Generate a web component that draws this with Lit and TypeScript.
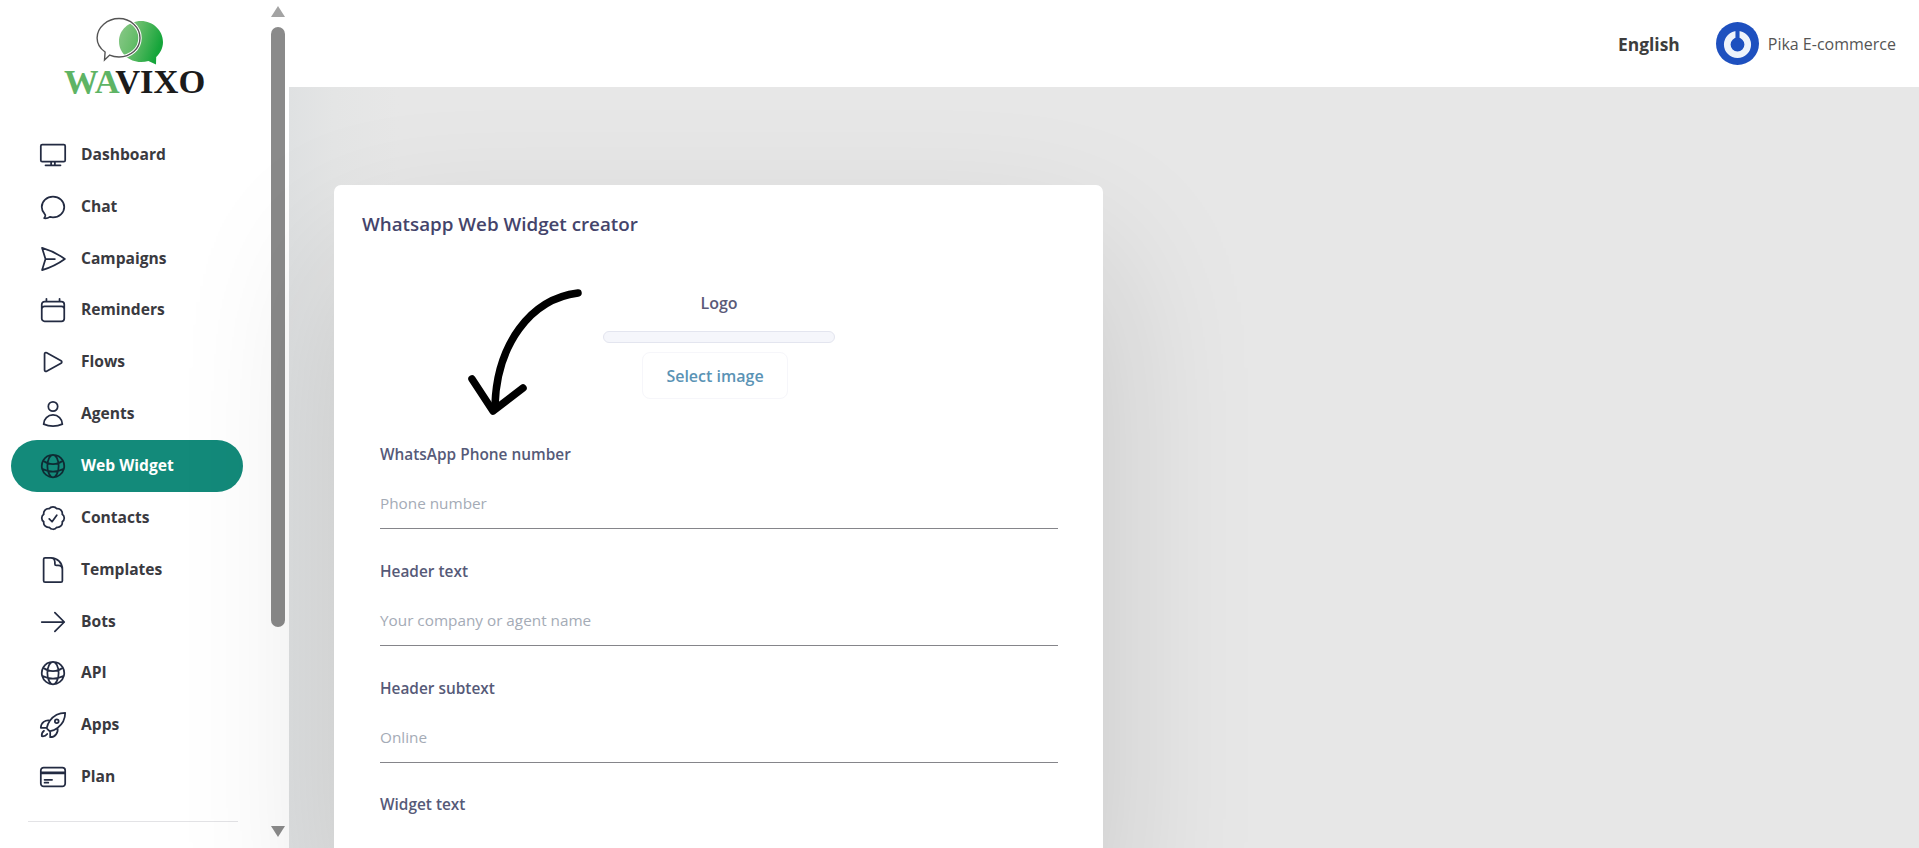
import { LitElement, html, css } from "lit";
import { customElement } from "lit/decorators.js";

const ICONS: Record<string, string> = {
  tv: "M6 20.25h12m-7.5-3v3m3-3v3m-10.125-3h17.25c.621 0 1.125-.504 1.125-1.125V4.875c0-.621-.504-1.125-1.125-1.125H3.375c-.621 0-1.125.504-1.125 1.125v11.25c0 .621.504 1.125 1.125 1.125z",
  chat: "M12 20.25c4.97 0 9-3.694 9-8.25s-4.03-8.25-9-8.25S3 7.444 3 12c0 2.104.859 4.023 2.273 5.48.432.447.74 1.04.586 1.641a4.483 4.483 0 01-.923 1.785A5.969 5.969 0 006 21c1.282 0 2.47-.402 3.445-1.087.81.22 1.668.337 2.555.337z",
  plane: "M6 12L3.269 3.126A59.768 59.768 0 0121.485 12 59.77 59.77 0 013.27 20.876L5.999 12zm0 0h7.5",
  calendar: "M6.75 3v2.25M17.25 3v2.25M3 18.75V7.5a2.25 2.25 0 012.25-2.25h13.5A2.25 2.25 0 0121 7.5v11.25m-18 0A2.25 2.25 0 005.25 21h13.5A2.25 2.25 0 0021 18.75m-18 0v-7.5A2.25 2.25 0 015.25 9h13.5A2.25 2.25 0 0121 11.25v7.5",
  play: "M5.25 5.653c0-.856.917-1.398 1.667-.986l11.54 6.348a1.125 1.125 0 010 1.971l-11.54 6.347a1.125 1.125 0 01-1.667-.985V5.653z",
  user: "M15.75 6a3.75 3.75 0 11-7.5 0 3.75 3.75 0 017.5 0zM4.501 20.118a7.5 7.5 0 0114.998 0A17.933 17.933 0 0112 21.75c-2.676 0-5.216-.584-7.499-1.632z",
  globe: "M12 21a9.004 9.004 0 008.716-6.747M12 21a9.004 9.004 0 01-8.716-6.747M12 21c2.485 0 4.5-4.03 4.5-9S14.485 3 12 3m0 18c-2.485 0-4.5-4.03-4.5-9S9.515 3 12 3m0 0a8.997 8.997 0 017.843 4.582M12 3a8.997 8.997 0 00-7.843 4.582m15.686 0A11.953 11.953 0 0112 10.5c-2.998 0-5.74-1.1-7.843-2.918m15.686 0A8.959 8.959 0 0121 12c0 .778-.099 1.533-.284 2.253m0 0A17.919 17.919 0 0112 16.5c-3.162 0-6.133-.815-8.716-2.247m0 0A9.015 9.015 0 013 12c0-1.605.42-3.113 1.157-4.418",
  badge: "M9 12.75L11.25 15 15 9.75M21 12c0 1.268-.63 2.39-1.593 3.068a3.745 3.745 0 01-1.043 3.296 3.745 3.745 0 01-3.296 1.043A3.745 3.745 0 0112 21c-1.268 0-2.39-.63-3.068-1.593a3.746 3.746 0 01-3.296-1.043 3.745 3.745 0 01-1.043-3.296A3.745 3.745 0 013 12c0-1.268.63-2.39 1.593-3.068a3.745 3.745 0 011.043-3.296 3.746 3.746 0 013.296-1.043A3.746 3.746 0 0112 3c1.268 0 2.39.63 3.068 1.593a3.746 3.746 0 013.296 1.043 3.746 3.746 0 011.043 3.296A3.745 3.745 0 0121 12z",
  doc: "M19.5 14.25v-2.625a3.375 3.375 0 00-3.375-3.375h-1.5A1.125 1.125 0 0113.5 7.125v-1.5a3.375 3.375 0 00-3.375-3.375H8.25m2.25 0H5.625c-.621 0-1.125.504-1.125 1.125v17.25c0 .621.504 1.125 1.125 1.125h12.75c.621 0 1.125-.504 1.125-1.125V11.25a9 9 0 00-9-9z",
  arrow: "M13.5 4.5L21 12m0 0l-7.5 7.5M21 12H3",
  rocket: "M15.59 14.37a6 6 0 01-5.84 7.38v-4.8m5.84-2.58a14.98 14.98 0 006.16-12.12A14.98 14.98 0 009.631 8.41m5.96 5.96a14.926 14.926 0 01-5.841 2.58m-.119-8.54a6 6 0 00-7.381 5.84h4.8m2.581-5.84a14.927 14.927 0 00-2.58 5.84m2.699 2.7c-.103.021-.207.041-.311.06a15.09 15.09 0 01-2.448-2.448 14.9 14.9 0 01.06-.312m-2.24 2.39a4.493 4.493 0 00-1.757 4.306 4.493 4.493 0 004.306-1.758M16.5 9a1.5 1.5 0 11-3 0 1.5 1.5 0 013 0z",
  card: "M2.25 8.25h19.5M2.25 9h19.5m-16.5 5.25h6m-6 2.25h3m-3.75 3h15a2.25 2.25 0 002.25-2.25V6.75A2.25 2.25 0 0019.5 4.5h-15a2.25 2.25 0 00-2.25 2.25v10.5A2.25 2.25 0 004.5 19.5z",
};

const NAV: [string, string][] = [
  ["tv", "Dashboard"], ["chat", "Chat"], ["plane", "Campaigns"], ["calendar", "Reminders"],
  ["play", "Flows"], ["user", "Agents"], ["globe", "Web Widget"], ["badge", "Contacts"],
  ["doc", "Templates"], ["arrow", "Bots"], ["globe", "API"], ["rocket", "Apps"], ["card", "Plan"],
];

const FIELDS: [string, string][] = [
  ["WhatsApp Phone number", "Phone number"],
  ["Header text", "Your company or agent name"],
  ["Header subtext", "Online"],
  ["Widget text", ""],
];

const BUBBLE = "M119 18.500c11.500 0 21 8.700 21 19.500s-9.500 19-21 19c-3.500 0-6.500-.6-9.300-1.900L104.500 60l.6-8c-5-3.500-8-8.500-8-14 0-10.800 10.400-19.500 21.900-19.500z";

@customElement("app-root")
export class AppRoot extends LitElement {
  static styles = css`
    :host {
      display: grid;
      grid-template-columns: 289px 1fr;
      width: 100%;
      height: 848px;
      overflow: hidden;
      font-family: "Open Sans", "Noto Sans", sans-serif;
      background: #fff;
    }
    .sidebar {
      display: flex;
      height: 848px;
      overflow: hidden;
    }
    .side-main {
      width: 270px;
      flex: none;
      display: flex;
      flex-direction: column;
    }
    .logo {
      height: 129px;
      padding-left: 64px;
      box-sizing: border-box;
      flex: none;
    }
    .logo svg { display: block; margin-left: 31px; margin-top: 15px; }
    .wordmark {
      font-family: "Liberation Serif", serif;
      font-weight: 700;
      font-size: 34.5px;
      line-height: 28px;
      color: #1b1b1b;
      white-space: nowrap;
    }
    .wordmark span { color: #5eb465; }
    nav {
      display: flex;
      flex-direction: column;
      padding: 0 27px 0 11px;
    }
    .item {
      height: 51.85px;
      display: flex;
      align-items: center;
      gap: 13px;
      padding-left: 27px;
      border-radius: 26px;
      font-size: 15.6px;
      font-weight: 700;
      color: #3a3a3f;
      box-sizing: border-box;
    }
    .item span { padding-bottom: 2px; }
    .item.active { background: #138a7a; color: #fff; }
    .item svg {
      width: 30px;
      height: 30px;
      flex: none;
      fill: none;
      stroke: #232b42;
      stroke-width: 1.4;
      stroke-linecap: round;
      stroke-linejoin: round;
    }
    .item.active svg { stroke: #0e2b33; }
    .rule {
      height: 1px;
      background: #e3e3e6;
      margin: 18px 32px 0 28px;
    }
    .scrollbar {
      width: 15px;
      flex: none;
      display: flex;
      flex-direction: column;
      align-items: center;
      padding-top: 6px;
      box-sizing: border-box;
      height: 848px;
    }
    .up {
      width: 0; height: 0;
      border-left: 7.5px solid transparent;
      border-right: 7.5px solid transparent;
      border-bottom: 11px solid #a3a3a3;
    }
    .down {
      width: 0; height: 0;
      border-left: 7.5px solid transparent;
      border-right: 7.5px solid transparent;
      border-top: 11px solid #8c8c8c;
      margin-top: 199px;
    }
    .thumb {
      width: 14px;
      height: 600px;
      margin-top: 10px;
      background: #8a8a8a;
      border-radius: 7px;
    }
    .main {
      display: flex;
      flex-direction: column;
      min-width: 0;
      position: relative;
    }
    header {
      height: 87px;
      flex: none;
      background: #fff;
      display: flex;
      align-items: center;
      justify-content: flex-end;
      padding-right: 23px;
      box-sizing: border-box;
      position: relative;
      z-index: 2;
    }
    .lang {
      font-size: 17.4px;
      font-weight: 700;
      color: #3d3d3d;
      margin-right: 36px;
    }
    .avatar { width: 43px; height: 43px; flex: none; margin-right: 9px; }
    .org { font-size: 16px; color: #555; }
    .content {
      flex: 1;
      background: linear-gradient(90deg, #dfe1e2 0, #e4e5e5 45px, #e7e7e7 110px);
      padding: 98px 0 0 45px;
      position: relative;
      z-index: 1;
      min-height: 0;
    }
    .card {
      width: 769px;
      height: 700px;
      background: #fff;
      border-radius: 7px;
      box-shadow: 0 70px 160px rgba(0,0,0,.14);
      position: relative;
      padding: 26px 28px 0;
      box-sizing: border-box;
    }
    h1 {
      margin: 0;
      font-size: 18.8px;
      line-height: 26px;
      font-weight: 600;
      color: #44446b;
    }
    .logo-block {
      display: flex;
      flex-direction: column;
      margin-top: 55px;
      margin-left: 241px;
      width: 232px;
    }
    .logo-label {
      font-size: 16px;
      line-height: 22px;
      font-weight: 600;
      color: #5a5a78;
      text-align: center;
    }
    .bar {
      height: 12px;
      margin-top: 17px;
      background: #f5f6fb;
      border: 1px solid #e3e5ef;
      border-radius: 6px;
      box-sizing: border-box;
    }
    .btn {
      width: 146px;
      height: 47px;
      margin: 9px 0 0 39px;
      box-sizing: border-box;
      border: 1px solid #f6f6fa;
      border-radius: 8px;
      display: flex;
      align-items: center;
      justify-content: center;
      font-size: 16px;
      font-weight: 600;
      color: #5a93b5;
    }
    .fields {
      display: flex;
      flex-direction: column;
      padding: 45px 17px 0 18px;
    }
    .field { height: 116.8px; }
    .label {
      font-size: 15.4px;
      line-height: 22px;
      font-weight: 600;
      color: #565a78;
    }
    .input {
      height: 63px;
      display: flex;
      align-items: center;
      padding-top: 12px;
      box-sizing: border-box;
      font-size: 15.3px;
      color: #a4abb6;
      border-bottom: 1px solid #85858a;
    }
    .arrow {
      position: absolute;
      left: 0; top: 0;
      width: 769px; height: 300px;
      pointer-events: none;
      fill: none;
      stroke: #000;
      stroke-width: 7.5;
      stroke-linecap: round;
      stroke-linejoin: round;
    }
  `;

  render() {
    return html`
      <aside class="sidebar">
        <div class="side-main">
          <div class="logo">
            <svg width="72" height="52" viewBox="95 15 72 52">
              <defs>
                <linearGradient id="g" x1="0" y1="0" x2="1" y2="0.35">
                  <stop offset="0" stop-color="#8cc98a"/>
                  <stop offset="0.45" stop-color="#66bd6a"/>
                  <stop offset="1" stop-color="#15a53a"/>
                </linearGradient>
              </defs>
              <path fill="url(#g)" d="M141 21c12 0 22 9.500 22 21 0 6-2.600 11-6.800 15l-.2 7.500-7.600-3.600c-2.300.7-4.800 1-7.400 1-12 0-22-9-22-20.500S129 21 141 21z"/>
              <path fill="none" stroke="#fff" stroke-width="3.400" d=${BUBBLE}/>
              <path fill="none" stroke="#555" stroke-width="1.400" d=${BUBBLE}/>
            </svg>
            <div class="wordmark"><span>WA</span>VIXO</div>
          </div>
          <nav>
            ${NAV.map(([icon, label]) => html`
              <div class="item ${label === "Web Widget" ? "active" : ""}">
                <svg viewBox="0 0 24 24"><path d=${ICONS[icon]}></path></svg>
                <span>${label}</span>
              </div>`)}
          </nav>
          <div class="rule"></div>
        </div>
        <div class="scrollbar">
          <div class="up"></div>
          <div class="thumb"></div>
          <div class="down"></div>
        </div>
      </aside>
      <div class="main">
        <header>
          <span class="lang">English</span>
          <svg class="avatar" viewBox="0 0 42 42">
            <circle cx="21" cy="21" r="21" fill="#1e50bf"/>
            <circle cx="21" cy="22" r="10" fill="none" stroke="#eef3fb" stroke-width="6.500"/>
            <rect x="19" y="6" width="4" height="13" fill="#1e50bf"/>
          </svg>
          <span class="org">Pika E-commerce</span>
        </header>
        <main class="content">
          <section class="card">
            <h1>Whatsapp Web Widget creator</h1>
            <div class="logo-block">
              <div class="logo-label">Logo</div>
              <div class="bar"></div>
              <div class="btn">Select image</div>
            </div>
            <div class="fields">
              ${FIELDS.map(([l, p]) => html`
                <div class="field">
                  <div class="label">${l}</div>
                  <div class="input">${p}</div>
                </div>`)}
            </div>
            <svg class="arrow" viewBox="0 0 769 300">
              <path d="M244 108C196 114 163 160 161 220"></path>
              <path d="M138 194L159 226L189 203"></path>
            </svg>
          </section>
        </main>
      </div>
    `;
  }
}
